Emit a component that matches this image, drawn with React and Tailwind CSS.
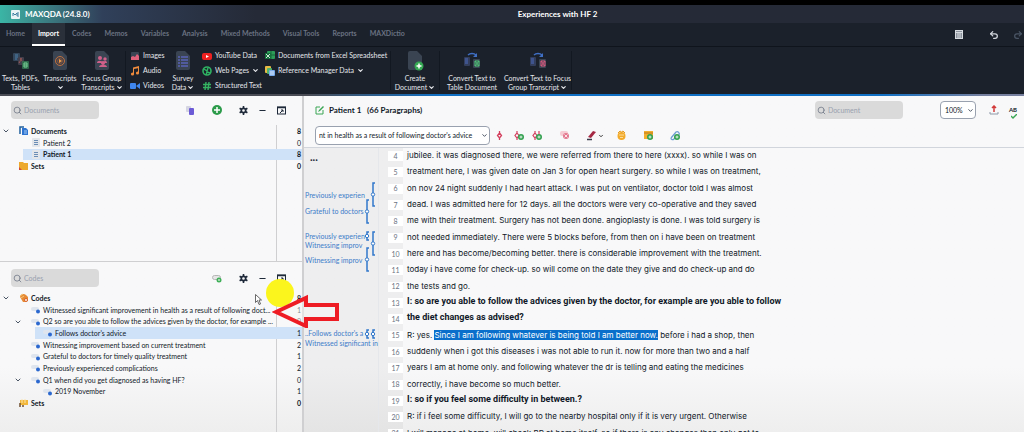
import React, { useState } from 'react';
import { ChevronDown, Search, Minus, Undo2, Redo2 } from 'lucide-react';

const tabs = ['Home', 'Import', 'Codes', 'Memos', 'Variables', 'Analysis', 'Mixed Methods', 'Visual Tools', 'Reports', 'MAXDictio'];

const documentRows = [
    { label: 'Documents', count: 8, level: 0, icon: 'documents', bold: true, open: true },
    { label: 'Patient 2', count: 0, level: 1, icon: 'page' },
    { label: 'Patient 1', count: 8, level: 1, icon: 'page', bold: true, selected: true },
    { label: 'Sets', count: 0, level: 0, icon: 'folder', bold: true },
];

const codeRows = [
    { label: 'Codes', count: 8, level: 0, icon: 'codes', bold: true, open: true },
    { label: 'Witnessed significant improvement in health as a result of following doct...', count: 1, level: 1, icon: 'code' },
    { label: 'Q2 so are you able to follow the advices given by the doctor, for example ...', count: 0, level: 1, icon: 'code', open: true },
    { label: 'Follows doctor\'s advice', count: 1, level: 2, icon: 'code', selected: true },
    { label: 'Witnessing improvement based on current treatment', count: 2, level: 1, icon: 'code' },
    { label: 'Grateful to doctors for timely quality treatment', count: 1, level: 1, icon: 'code' },
    { label: 'Previously experienced complications', count: 2, level: 1, icon: 'code' },
    { label: 'Q1 when did you get diagnosed as having HF?', count: 0, level: 1, icon: 'code', open: true },
    { label: '2019 November', count: 1, level: 2, icon: 'code' },
    { label: 'Sets', count: 0, level: 0, icon: 'codeset', bold: true },
];

const lines = [
    { n: 4, text: 'jubilee. it was diagnosed there, we were referred from there to here (xxxx). so while I was on' },
    { n: 5, text: 'treatment here, I was given date on Jan 3 for open heart surgery. so while I was on treatment,' },
    { n: 6, text: 'on nov 24 night suddenly I had heart attack. I was put on ventilator, doctor told I was almost' },
    { n: 7, text: 'dead. I was admitted here for 12 days. all the doctors were very co-operative and they saved' },
    { n: 8, text: 'me with their treatment. Surgery has not been done. angioplasty is done. I was told surgery is' },
    { n: 9, text: 'not needed immediately. There were 5 blocks before, from then on i have been on treatment' },
    { n: 10, text: 'here and has become/becoming better. there is considerable improvement with the treatment.' },
    { n: 11, text: 'today i have come for check-up. so will come on the date they give and do check-up and do' },
    { n: 12, text: 'the tests and go.' },
    { n: 13, text: 'I: so are you able to follow the advices given by the doctor, for example are you able to follow', bold: true },
    { n: 14, text: 'the diet changes as advised?', bold: true },
    { n: 15, text: 'R: yes. ', marked: 'Since I am following whatever is being told I am better now.', rest: ' before i had a shop, then' },
    { n: 16, text: 'suddenly when i got this diseases i was not able to run it. now for more than two and a half' },
    { n: 17, text: 'years I am at home only. and following whatever the dr is telling and eating the medicines' },
    { n: 18, text: 'correctly, i have become so much better.' },
    { n: 19, text: 'I: so if you feel some difficulty in between.?', bold: true },
    { n: 20, text: 'R: if i feel some difficulty, I will go to the nearby hospital only if it is very urgent. Otherwise' },
    { n: 21, text: 'I will manage at home. will check BP at home itself. so if there is any changes then only got to' },
];

// Code stripes in the margin, in pixels from the top of the text
const stripes = [
    { x: 69, top: 35, bottom: 58 },
    { x: 63, top: 52, bottom: 75 },
    { x: 63, top: 84, bottom: 92 },
    { x: 69, top: 84, bottom: 107 },
    { x: 63, top: 100, bottom: 123 },
    { x: 63, top: 182, bottom: 190 },
    { x: 69, top: 182, bottom: 190 },
];

const stripeLabels = [
    { top: 43, text: 'Previously experien' },
    { top: 59, text: 'Grateful to doctors' },
    { top: 84, text: 'Previously experien' },
    { top: 93, text: 'Witnessing improv' },
    { top: 108, text: 'Witnessing improv' },
    { top: 181, text: '..Follows doctor\'s a' },
    { top: 191, text: 'Witnessed significant in' },
];

const PagePath = ({ x = 0, y = 0 }) => (
    <path transform={`translate(${x} ${y})`} d="M2 0h7l5 5v12a2 2 0 0 1-2 2H2a2 2 0 0 1-2-2V2a2 2 0 0 1 2-2z" fill="#3a4452" />
);

const TextsIcon = () => (
    <svg width="18" height="20" viewBox="0 0 18 20">
        <rect x="1" y="2" width="7" height="8" rx="1" fill="#34465a" />
        <path d="M3 4h3M3 6h3M3 8h2" stroke="#4c80ab" />
        <rect x="6" y="6" width="6" height="8" rx="1" fill="#433f4c" />
        <path d="M7 12c1-1 2-4 2-5 0 2 1 4 3 4" stroke="#9c5855" fill="none" />
        <rect x="10" y="10" width="7" height="8" rx="1" fill="#2f6b4c" />
        <path d="M12 12h3v4h-3zM12 14h3" stroke="#79cf95" fill="none" />
    </svg>
);

const TranscriptsIcon = () => (
    <svg width="18" height="20" viewBox="0 0 18 20">
        <PagePath x={2} />
        <circle cx="9" cy="10" r="4.5" fill="none" stroke="#c4713c" />
        <circle cx="9" cy="10" r="2.5" fill="none" stroke="#8a4f34" />
        <path d="M8 8l3 2-3 2z" fill="#f09a45" />
    </svg>
);

const FocusIcon = () => (
    <svg width="18" height="20" viewBox="0 0 18 20">
        <PagePath x={2} />
        <g fill="#d0608a">
            <circle cx="7" cy="7" r="2" /><circle cx="12" cy="8" r="1.700" />
            <path d="M4 12c0-3 5-3 6 0zM10 12c0-2 4-3 4 0z" />
            <circle cx="10" cy="12" r="2" /><path d="M6 16c0-3 8-3 8 0z" />
        </g>
    </svg>
);

const SurveyIcon = () => (
    <svg width="18" height="20" viewBox="0 0 18 20">
        <PagePath x={2} />
        <path d="M4 6h2M4 9h2M4 12h2M4 15h2M7 6h7M7 9h7M7 12h7M7 15h7" stroke="#5a63b8" strokeWidth="1.600" />
    </svg>
);

const CreateIcon = () => (
    <svg width="18" height="20" viewBox="0 0 18 20">
        <PagePath x={2} />
        <circle cx="13" cy="15" r="4.500" fill="#35a853" />
        <path d="M13 12.500v5M10.500 15h5" stroke="#fff" strokeWidth="1.500" />
    </svg>
);

const ConvertIcon = ({ color }) => (
    <svg width="18" height="20" viewBox="0 0 18 20">
        <path d="M5 4c2-2 6-2 8 0" fill="none" stroke="#3f6fc4" strokeWidth="1.400" />
        <path d="M14 2v4h-4z" fill="#3f6fc4" />
        <rect x="1" y="6" width="6" height="9" rx="1" fill="#333e5c" />
        <path d="M2 8h3M2 10h3M2 12h3" stroke="#4c6bc0" />
        <rect x="10" y="8" width="7" height="9" rx="1" fill="#3a4452" />
        <path d="M12 10h4v5h-4zM12 10l4 5M16 10l-4 5" stroke={color} fill="none" />
    </svg>
);

const SmallIcon = ({ name }) => (
    <svg width="10" height="10" viewBox="0 0 10 10" className="shrink-0">
        {name === 'images' && <g><rect x="1" y="1" width="8" height="8" rx="1" fill="#3a4452" /><path d="M1 9V6l2-1 2 1 2-3 2 2v4z" fill="#e0607a" /></g>}
        {name === 'audio' && <g fill="#f08b3c"><path d="M3 1.500L9 0v2L4 3v5H3z" /><path d="M8 1h1v6H8z" /><circle cx="2.500" cy="8" r="1.600" /><circle cx="7.500" cy="7" r="1.600" /></g>}
        {name === 'videos' && <g fill="#3f87f0"><rect x="0" y="2" width="6" height="6" rx="1" /><path d="M6 5l4-3v6z" /></g>}
        {name === 'youtube' && <g><rect x="0" y="2" width="10" height="7" rx="2" fill="#ee2020" /><path d="M4 4l3 1.500L4 7z" fill="#fff" /></g>}
        {name === 'web' && <g fill="none" stroke="#2fb463"><circle cx="5" cy="5" r="4" strokeWidth="1.600" /><path d="M2 3l3 2 1-3M4 9l1-3 3 1" strokeWidth="1.400" /></g>}
        {name === 'hash' && <path d="M4 1L3 9M7 1L6 9M1 3.500h8M1 6.500h8" stroke="#35b462" strokeWidth="1.400" />}
        {name === 'excel' && <g><rect x="2" y="0" width="8" height="8" rx="1" fill="#2c9c58" /><path d="M6 0v8M2 4h8" stroke="#17663a" /><rect x="0" y="2" width="6" height="6" fill="#15713c" /><path d="M1 3l4 4M5 3L1 7" stroke="#fff" strokeWidth=".8" /></g>}
        {name === 'reference' && <g><rect x="0" y="0" width="6" height="7" rx="1" fill="#e8bb45" /><rect x="2" y="2" width="5" height="6" rx="1" fill="#4fb26e" /><rect x="4" y="4" width="6" height="6" rx="1" fill="#77a9ea" /><path d="M5 6h4M5 8h4" stroke="#fff" strokeWidth=".8" /></g>}
    </svg>
);

const LargeButton = ({ icon, top, bottom, arrow, className }) => (
    <button className={`flex flex-col items-center pt-1 text-[7px] leading-[9px] text-gray-200 ${className}`}>
        {icon}
        <span className="mt-[3px] whitespace-nowrap">{top}</span>
        <span className="flex h-[9px] items-center gap-px whitespace-nowrap">
            {bottom}
            {arrow && <ChevronDown size={7} strokeWidth={4} />}
        </span>
    </button>
);

const SmallButton = ({ icon, label, arrow }) => (
    <button className="flex h-[15px] items-center gap-[3px] whitespace-nowrap text-[7px] text-gray-200">
        <SmallIcon name={icon} />
        {label}
        {arrow && <ChevronDown size={7} strokeWidth={4} />}
    </button>
);

const Separator = () => <div className="my-1 w-px shrink-0 bg-[#121821]" />;

const TreeIcon = ({ name }) => (
    <svg width="10" height="10" viewBox="0 0 10 10" className="shrink-0">
        {name === 'documents' && <g><path d="M1 8V1h4" fill="none" stroke="#1f5f9c" strokeWidth="1.500" /><path d="M3 2h4l2 2v5H3z" fill="#2f74d0" /><path d="M5 5h3M5 7h3" stroke="#a9cdf5" /></g>}
        {name === 'page' && <g><rect x="1" y="0" width="8" height="9" rx="1" fill="#e3e6ea" /><path d="M3 2.500h4M3 4.500h4M3 6.500h4" stroke="#6b8db5" /></g>}
        {name === 'folder' && <g><path d="M0 1h4l1 1h4v7H0z" fill="#eda92c" /><path d="M0 6v3h3z" fill="#d2493a" /></g>}
        {name === 'codes' && <g><path d="M1 4c0-3 4-4 6-2l2 2v4L6 9H4z" fill="#e68a35" /><path d="M1 3l3-2M2 5l3-2" stroke="#f6c877" /><circle cx="7" cy="7" r="1.500" fill="#fff" stroke="#d95f24" /></g>}
        {name === 'code' && <g><rect x="0" y="2" width="8" height="4" rx="2" fill="#dfe5ee" /><circle cx="7" cy="6.500" r="2" fill="#2b68cf" /></g>}
        {name === 'codeset' && <g><path d="M1 2h8v5H1z" fill="#f2b73a" /><path d="M3 1v4M6 1v4" stroke="#fbe3ab" /><path d="M1 5v4M3 8h2" stroke="#705030" strokeWidth="1.500" /></g>}
    </svg>
);

const indents = ['pl-[19px]', 'pl-[31px]', 'pl-[43px]'];
const chevronPads = ['pl-[2px]', 'pl-[14px]'];
const selections = ['', 'ml-[23px]', 'ml-[35px]'];

const Tree = ({ rows }) => (
    <ul className="relative flex-1 text-[7px] text-gray-900">
        {rows.map((row, i) => (
            <li key={i} className="relative flex h-3 items-center nth-[3n]:h-[11px]">
                {row.selected && <span className={`absolute inset-y-0 right-0 left-0 bg-[#cfe2f8] ${selections[row.level]}`} />}
                {row.open && (
                    <button aria-label="Collapse" className={`absolute left-0 text-gray-600 ${chevronPads[row.level]}`}>
                        <ChevronDown size={8} strokeWidth={3} />
                    </button>
                )}
                <span className={`relative flex min-w-0 flex-1 items-center gap-[2px] ${indents[row.level]} ${row.bold ? 'font-bold' : ''}`}>
                    <TreeIcon name={row.icon} />
                    <span className="whitespace-nowrap">{row.label}</span>
                </span>
                <span className={`relative w-6 shrink-0 pr-px text-right ${row.bold ? 'font-bold' : ''}`}>{row.count}</span>
            </li>
        ))}
    </ul>
);

const SearchBox = ({ label }) => (
    <label className="flex h-[18px] w-[88px] items-center gap-[2px] rounded-sm bg-[#dadada] px-[2px] text-gray-500">
        <Search size={9} strokeWidth={2} className="shrink-0" />
        <input aria-label={label} placeholder={label} className="w-full min-w-0 bg-transparent text-[7px] outline-none placeholder:text-gray-400" />
    </label>
);

const PanelTools = ({ children }) => (
    <div className="flex items-center gap-[10px] text-gray-800">
        {children}
        <button aria-label="Settings">
            <svg width="9" height="9" viewBox="0 0 9 9" fill="none" stroke="currentColor"><circle cx="4.500" cy="4.500" r="2.200" strokeWidth="1.700" /><path d="M4.500 0v2M4.500 7v2M.600 2.200l1.700 1M6.700 5.800l1.700 1M.600 6.800l1.700-1M6.700 3.200l1.700-1" strokeWidth="1.600" /></svg>
        </button>
        <button aria-label="Minimize"><Minus size={9} strokeWidth={3} /></button>
        <button aria-label="Undock">
            <svg width="9" height="9" viewBox="0 0 9 9"><rect x=".5" y="1" width="8" height="7" fill="none" stroke="currentColor" /><path d="M0 1.500h9" stroke="currentColor" strokeWidth="1.500" /><path d="M3 7l3-3M4 4h2v2" fill="none" stroke="currentColor" /></svg>
        </button>
    </div>
);

const PlusBadge = ({ x, y }) => (
    <g><circle cx={x} cy={y} r="3" fill="#33a150" /><path d={`M${x - 1.5} ${y}h3M${x} ${y - 1.5}v3`} stroke="#fff" strokeWidth=".8" /></g>
);

const ToolIcon = ({ name }) => (
    <svg width="11" height="11" viewBox="0 0 11 11">
        {name === 'code' && <path d="M5.500 1v2M5.500 8v2M5.500 3L7.500 5.500 5.500 8 3.500 5.500z" fill="none" stroke="#d33d5c" strokeWidth="1.300" />}
        {name === 'newcode' && <g><path d="M4 1v2M4 8v2M4 3l2 2.500L4 8 2 5.500z" fill="none" stroke="#d33d5c" strokeWidth="1.200" /><PlusBadge x={8} y={7} /></g>}
        {name === 'invivo' && <g><path d="M3 1v2M3 8v2M3 3l2 2.500L3 8 1 5.500zM7 1v5" fill="none" stroke="#d33d5c" strokeWidth="1.200" /><PlusBadge x={7} y={7} /></g>}
        {name === 'uncode' && <g><rect x="1" y="1" width="8" height="5" rx="2" fill="#f6ccd4" /><circle cx="7" cy="6" r="3" fill="#e3778e" /><path d="M5.500 4.500l3 3M8.500 4.500l-3 3" stroke="#fff" strokeWidth=".8" /></g>}
        {name === 'pen' && <g><path d="M2 7l5-6 3 1-5 6z" fill="#a52843" /><path d="M1 9.500h5" stroke="#3c3c4c" strokeWidth="1.500" /></g>}
        {name === 'emoji' && <g><circle cx="5.500" cy="6" r="4" fill="#f3ab2b" /><path d="M2 3l2-2 1.500 1L7 1l2 2" stroke="#e49a1c" fill="none" /><path d="M3 5h5M4 7.500h3" stroke="#fde9b8" strokeWidth=".8" /></g>}
        {name === 'memo' && <g><path d="M1 1h9v8H1z" fill="#f3ae2e" /><path d="M1 3h9" stroke="#b9791a" /><PlusBadge x={7} y={7} /></g>}
        {name === 'link' && <g><path d="M1 8l5-6c2-1 4 1 3 3M1 8c0 2 2 2 3 1l3-4" fill="none" stroke="#6d9dd1" strokeWidth="1.300" /><PlusBadge x={7} y={7} /></g>}
    </svg>
);

export default function App() {
    const [activeTab, setActiveTab] = useState('Import');

    return (
        <div className="relative flex h-screen flex-col overflow-hidden bg-linear-to-b from-[#f8f8f9] from-85% to-[#eeeeee] font-['Lato','Noto_Sans',sans-serif]">
            {/* Title bar */}
            <div className="h-[5px] shrink-0 bg-black" />
            <header className="flex h-[18px] shrink-0 items-center bg-[#252a37] bg-linear-to-r from-[#3ab5a5] via-[#30405a] via-10% to-[#252a37] to-25% text-[8px] font-bold text-white">
                <div className="flex flex-1 items-center gap-[5px] pl-[11px]">
                    <svg width="9" height="9" viewBox="0 0 9 9"><rect width="9" height="9" rx="1" fill="#e9f4f5" /><path d="M2 6V3l2 2 2-2v3M7 2v5" fill="none" stroke="#3f7fa0" /></svg>
                    <span>MAXQDA (24.8.0)</span>
                </div>
                <h1 className="pl-20">Experiences with HF 2</h1>
                <div className="flex-1" />
            </header>

            {/* Tabs */}
            <nav className="flex h-[23px] shrink-0 items-stretch gap-px bg-[#1b212b] text-[7px] font-bold text-gray-500">
                {tabs.map((tab) => (
                    <button
                        key={tab}
                        onClick={() => setActiveTab(tab)}
                        className={`px-[6px] ${activeTab === tab ? 'border-b-2 border-white bg-[#2a303a] text-white' : 'border-b-2 border-transparent'}`}
                    >
                        {tab}
                    </button>
                ))}
                <div className="ml-auto flex items-center gap-[26px] pr-px text-gray-300">
                    <button aria-label="Calendar">
                        <svg width="8" height="9" viewBox="0 0 8 9"><rect x=".5" y=".5" width="7" height="8" fill="#8b929c" stroke="#d7dbe0" /><path d="M1 2.500h6M3 3v5M5 3v5" stroke="#d7dbe0" /></svg>
                    </button>
                    <button aria-label="Undo"><Undo2 size={10} strokeWidth={3} /></button>
                    <button aria-label="Redo" className="-ml-3 text-gray-600"><Redo2 size={10} strokeWidth={3} /></button>
                </div>
            </nav>

            {/* Ribbon */}
            <div className="flex h-12 shrink-0 border-t border-[#0f141c] bg-[#1b212b]">
                <LargeButton icon={<TextsIcon />} top="Texts, PDFs," bottom="Tables" className="w-[41px]" />
                <LargeButton icon={<TranscriptsIcon />} top="Transcripts" arrow className="w-[38px]" />
                <LargeButton icon={<FocusIcon />} top="Focus Group" bottom="Transcripts" arrow className="w-[46px]" />
                <Separator />
                <div className="w-[41px] pt-px pl-1">
                    <SmallButton icon="images" label="Images" />
                    <SmallButton icon="audio" label="Audio" />
                    <SmallButton icon="videos" label="Videos" />
                </div>
                <LargeButton icon={<SurveyIcon />} top="Survey" bottom="Data" arrow className="w-8" />
                <div className="w-[66px] pt-px pl-[3px]">
                    <SmallButton icon="youtube" label="YouTube Data" />
                    <SmallButton icon="web" label="Web Pages" arrow />
                    <SmallButton icon="hash" label="Structured Text" />
                </div>
                <div className="w-[125px] pt-px">
                    <SmallButton icon="excel" label="Documents from Excel Spreadsheet" />
                    <SmallButton icon="reference" label="Reference Manager Data" arrow />
                </div>
                <Separator />
                <LargeButton icon={<CreateIcon />} top="Create" bottom="Document" arrow className="w-12" />
                <Separator />
                <LargeButton icon={<ConvertIcon color="#4fc276" />} top="Convert Text to" bottom="Table Document" className="w-16" />
                <LargeButton icon={<ConvertIcon color="#d8577c" />} top="Convert Text to Focus" bottom="Group Transcript" arrow className="w-[67px]" />
                <Separator />
            </div>
            <div className="h-[2px] shrink-0 bg-[linear-gradient(to_right,#4a4c55_30%,#1170c4_43%,#1170c4_86%,#77809f_96%)]" />

            <div className="flex min-h-0 flex-1">
                {/* Document and code systems */}
                <aside className="flex w-[304px] shrink-0 flex-col border-r-2 border-[#cfcfd1]">
                    <section className="flex h-[166px] shrink-0 flex-col border-b border-[#cfcfd1]">
                        <div className="flex items-center justify-between pt-[5px] pr-4 pb-[6px] pl-[11px]">
                            <SearchBox label="Documents" />
                            <PanelTools>
                                <button aria-label="Activate documents" className="mr-[7px]">
                                    <svg width="9" height="9" viewBox="0 0 9 9"><rect x="0" y="0" width="5" height="6" rx="1" fill="#d5d5e2" /><rect x="3" y="2" width="5" height="7" rx="1" fill="#6c5bd6" /></svg>
                                </button>
                                <button aria-label="Add document" className="mr-[7px]">
                                    <svg width="10" height="10" viewBox="0 0 10 10"><circle cx="5" cy="5" r="5" fill="#2c9b4a" /><path d="M5 2v6M2 5h6" stroke="#fff" strokeWidth="1.500" /></svg>
                                </button>
                            </PanelTools>
                        </div>
                        <div className="relative flex flex-1">
                            <div className="absolute inset-y-0 right-[25px] w-px bg-[#cfcfd1]" />
                            <Tree rows={documentRows} />
                        </div>
                    </section>
                    <section className="flex flex-1 flex-col">
                        <div className="flex items-center justify-between pt-[7px] pr-4 pb-[5px] pl-[11px]">
                            <SearchBox label="Codes" />
                            <PanelTools>
                                <button aria-label="New code" className="mr-[7px]">
                                    <svg width="10" height="9" viewBox="0 0 10 9"><rect x=".5" y="1.500" width="8" height="4" rx="2" fill="#e6e6e6" stroke="#b6b6b6" /><circle cx="7" cy="6" r="2.500" fill="#3faf58" /><path d="M7 5v2M6 6h2" stroke="#fff" strokeWidth=".6" /></svg>
                                </button>
                            </PanelTools>
                        </div>
                        <div className="relative flex flex-1">
                            <div className="absolute inset-y-0 right-[25px] w-px bg-[#cfcfd1]" />
                            <Tree rows={codeRows} />
                        </div>
                    </section>
                </aside>

                {/* Document browser */}
                <main className="flex min-w-0 flex-1 flex-col">
                    <div className="flex h-7 shrink-0 items-center pr-[7px] pl-[11px]">
                        <svg width="9" height="9" viewBox="0 0 9 9"><path d="M5 1H1v7h7V4" fill="none" stroke="#3aa655" /><path d="M3 6l1-2 4-4 1 1-4 4z" fill="#3aa655" /></svg>
                        <h2 className="ml-[5px] text-[8px] font-bold whitespace-pre text-gray-900">Patient 1   (66 Paragraphs)</h2>
                        <div className="ml-auto flex items-center">
                            <SearchBox label="Document" />
                            <div className="relative mr-[13px] ml-[37px] flex items-center">
                                <select aria-label="Zoom" className="h-[18px] w-9 appearance-none rounded-sm border border-gray-400 bg-white pl-1 text-[7px] text-gray-900">
                                    <option>100%</option>
                                </select>
                                <ChevronDown size={7} strokeWidth={3} className="pointer-events-none absolute right-[2px] text-gray-700" />
                            </div>
                            <button aria-label="Export" className="mr-[10px]">
                                <svg width="10" height="10" viewBox="0 0 10 10"><path d="M1 7v2h8V7" fill="none" stroke="#8e99a8" /><path d="M5 7V2M3 3l2-2 2 2" fill="none" stroke="#d23a3a" strokeWidth="1.500" /></svg>
                            </button>
                            <button aria-label="Spell check" className="relative flex text-[6px] leading-[10px] font-bold text-gray-900">
                                AB
                                <svg width="6" height="5" viewBox="0 0 6 5" className="absolute right-0 -bottom-1"><path d="M0 2l2 2 4-4" fill="none" stroke="#3aa655" strokeWidth="1.400" /></svg>
                            </button>
                        </div>
                    </div>
                    <div className="flex h-6 shrink-0 items-center border-b border-gray-300 pl-[11px]">
                        <div className="relative flex items-center">
                            <select aria-label="Code" className="h-[19px] w-[175px] appearance-none rounded-sm border border-gray-400 bg-white pl-[3px] text-[7px] text-gray-900">
                                <option>nt in health as a result of following doctor's advice</option>
                            </select>
                            <ChevronDown size={7} strokeWidth={3} className="pointer-events-none absolute right-[2px] text-gray-700" />
                        </div>
                        <div className="flex items-center pl-1">
                            <button aria-label="Code with selected code"><ToolIcon name="code" /></button>
                            <button aria-label="Code with new code" className="ml-2"><ToolIcon name="newcode" /></button>
                            <button aria-label="Code in vivo" className="ml-2"><ToolIcon name="invivo" /></button>
                            <button aria-label="Remove code" className="ml-4"><ToolIcon name="uncode" /></button>
                            <button aria-label="Highlight" className="ml-4 flex items-center gap-px"><ToolIcon name="pen" /><ChevronDown size={6} strokeWidth={3} /></button>
                            <button aria-label="Emoticode" className="ml-3"><ToolIcon name="emoji" /></button>
                            <button aria-label="New memo" className="ml-4"><ToolIcon name="memo" /></button>
                            <button aria-label="Insert link" className="ml-4"><ToolIcon name="link" /></button>
                        </div>
                    </div>

                    <div className="flex min-h-0 flex-1 overflow-hidden">
                        {/* Coding margin */}
                        <div className="relative w-[75px] shrink-0 border-r border-gray-200 bg-black/4 text-[7px] leading-[9px] text-[#3d7cc9]">
                            <span className="absolute top-1 left-[6px] text-[11px] font-bold text-gray-800">...</span>
                            {stripeLabels.map((s) => (
                                <span key={s.top} className="absolute left-px whitespace-nowrap" style={{ top: s.top }}>{s.text}</span>
                            ))}
                            <svg className="absolute inset-0 h-full w-full" fill="none" stroke="#3278cb">
                                {stripes.map((s) => (
                                    <g key={`${s.x}-${s.top}`}>
                                        <path d={`M${s.x + 2} ${s.top}h-2V${s.bottom}h2`} strokeWidth="1.500" />
                                        <circle cx={s.x} cy={(s.top + s.bottom) / 2} r="1.700" fill="#fff" />
                                    </g>
                                ))}
                            </svg>
                        </div>
                        <div className="w-[9px] shrink-0 bg-black/4" />
                        <ol className="min-w-0 flex-1 text-gray-900">
                            {lines.map((line) => (
                                <li key={line.n} className="flex h-4 items-center whitespace-pre nth-[3n]:h-[17px]">
                                    <span className="flex h-full w-[15px] shrink-0 items-center bg-black/4">
                                        <span className="flex h-[10px] w-full items-center justify-center bg-white text-[7px] text-gray-500">{line.n}</span>
                                    </span>
                                    <span className={`pb-[2px] pl-1 ${line.bold ? "font-['Roboto',sans-serif] text-[9px] font-bold" : "font-['Inter',sans-serif] text-[8px]"}`}>
                                        {line.text}
                                        {line.marked && <mark className="bg-[#0a6fcb] text-white">{line.marked}</mark>}
                                        {line.rest}
                                    </span>
                                </li>
                            ))}
                        </ol>
                    </div>
                </main>
            </div>

            {/* Pointer highlight and callout arrow */}
            <div className="pointer-events-none absolute top-[279px] left-[266px] size-7 rounded-full bg-[#fbf51d]" />
            <svg width="7" height="11" viewBox="0 0 7 11" className="pointer-events-none absolute top-[294px] left-[255px]"><path d="M.5.500v8l2-2 1.500 4 1.500-.5-1.500-4h2.500z" fill="#fff" stroke="#444" strokeWidth=".8" /></svg>
            <svg width="68" height="34" viewBox="0 0 68 34" className="pointer-events-none absolute top-[294px] left-[272px]"><path d="M4 18L34 4v7h31v14H34v7z" fill="#f5f5f6" fillOpacity=".5" stroke="#ee1c24" strokeWidth="4" /></svg>
        </div>
    );
}
